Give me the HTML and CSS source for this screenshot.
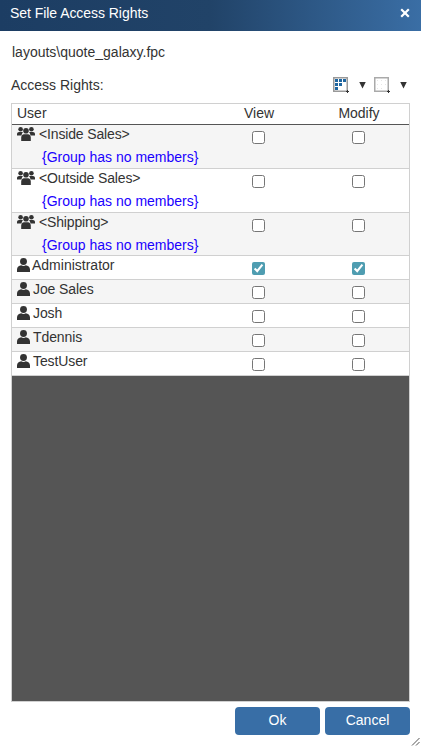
FILE: index.html
```html
<!DOCTYPE html>
<html lang="en">
<head>
<meta charset="utf-8">
<title>Set File Access Rights</title>
<link rel="stylesheet" href="styles.css">
</head>
<body>
<svg class="defs" width="0" height="0" aria-hidden="true">
  <symbol id="user" viewBox="1 0.5 14 15" preserveAspectRatio="none">
    <circle cx="8" cy="4.200" r="3.700" fill="#333"/>
    <path d="M1 15.500v-2.600C1 10.200 3.200 8.600 5.500 8.400c1.500 1 3.500 1 5 0 2.300.2 4.500 1.800 4.500 4.500v2.600z" fill="#333"/>
  </symbol>
  <symbol id="group" viewBox="0 0 18 14">
    <circle cx="3.600" cy="2.300" r="2.300" fill="#333"/>
    <circle cx="14.400" cy="2.300" r="2.300" fill="#333"/>
    <circle cx="9" cy="3.800" r="2.800" fill="#333"/>
    <path d="M0 8.500V7c0-1.200 1-2 2-2h3c.4 0 .7.1 1 .3-.8.6-1.300 1.600-1.400 3.200z" fill="#333"/>
    <path d="M18 8.500V7c0-1.200-1-2-2-2h-3c-.4 0-.7.1-1 .3.800.6 1.300 1.600 1.400 3.200z" fill="#333"/>
    <path d="M4.200 14v-3.500c0-1.800 1.300-3.200 2.800-3.200h4c1.500 0 2.800 1.400 2.800 3.200V14z" fill="#333"/>
  </symbol>
</svg>
<div class="dialog">
  <header class="titlebar">
    <span class="title">Set File Access Rights</span>
    <svg class="close" viewBox="0 0 10 10" width="10" height="10" aria-label="Close"><path d="M1.200 1.200l7.600 7.600M8.800 1.200l-7.600 7.600" stroke="#fff" stroke-width="2.200" fill="none"/></svg>
  </header>
  <main class="body">
    <div class="filename">layouts\quote_galaxy.fpc</div>
    <div class="rights-bar">
      <span>Access Rights:</span>
      <div class="tools">
        <svg class="tool" viewBox="0 0 16 16" width="16" height="16">
          <path d="M.75.750h13.500v13.500H.75z" fill="#fff" stroke="#999" stroke-width="1.500"/>
          <g fill="#1f66a0">
            <rect x="2" y="2" width="3" height="3"/><rect x="6" y="2" width="3" height="3"/><rect x="10" y="2" width="3" height="3"/>
            <rect x="2" y="6" width="3" height="3"/><rect x="6" y="6" width="3" height="3"/>
            <rect x="2" y="10" width="3" height="3"/>
          </g>
          <path d="M13 14.500h3M14.500 13v3" stroke="#333" stroke-width="1" fill="none"/>
        </svg>
        <span class="caret"></span>
        <svg class="tool" viewBox="0 0 16 16" width="16" height="16">
          <path d="M.75.750h13.500v13.500H.75z" fill="#fff" stroke="#aaa" stroke-width="1.500"/>
          <path d="M3 3.500h10M3 7.500h10M3 11.500h7" stroke="#e6e6e6" stroke-width="1" stroke-dasharray="1 3" fill="none"/>
          <path d="M13 14.500h3M14.500 13v3" stroke="#333" stroke-width="1" fill="none"/>
        </svg>
        <span class="caret"></span>
      </div>
    </div>
    <section class="table">
      <div class="row head">
        <span class="name">User</span><span class="col">View</span><span class="col">Modify</span>
      </div>
      <div class="row tall shade">
        <div class="name"><div class="who"><svg class="i-group"><use href="#group"/></svg><span class="group-name">&lt;Inside Sales&gt;</span></div><div class="none">{Group has no members}</div></div>
        <span class="col"><input type="checkbox"></span><span class="col"><input type="checkbox"></span>
      </div>
      <div class="row tall">
        <div class="name"><div class="who"><svg class="i-group"><use href="#group"/></svg><span class="group-name">&lt;Outside Sales&gt;</span></div><div class="none">{Group has no members}</div></div>
        <span class="col"><input type="checkbox"></span><span class="col"><input type="checkbox"></span>
      </div>
      <div class="row tall last-group shade">
        <div class="name"><div class="who"><svg class="i-group"><use href="#group"/></svg><span class="group-name">&lt;Shipping&gt;</span></div><div class="none">{Group has no members}</div></div>
        <span class="col"><input type="checkbox"></span><span class="col"><input type="checkbox"></span>
      </div>
      <div class="row short">
        <div class="name who"><svg class="i-user"><use href="#user"/></svg><span class="tight">Administrator</span></div>
        <span class="col"><input type="checkbox" checked></span><span class="col"><input type="checkbox" checked></span>
      </div>
      <div class="row short shade">
        <div class="name who"><svg class="i-user"><use href="#user"/></svg><span class="user-name">Joe Sales</span></div>
        <span class="col"><input type="checkbox"></span><span class="col"><input type="checkbox"></span>
      </div>
      <div class="row short">
        <div class="name who"><svg class="i-user"><use href="#user"/></svg><span class="user-name">Josh</span></div>
        <span class="col"><input type="checkbox"></span><span class="col"><input type="checkbox"></span>
      </div>
      <div class="row short shade">
        <div class="name who"><svg class="i-user"><use href="#user"/></svg><span class="user-name">Tdennis</span></div>
        <span class="col"><input type="checkbox"></span><span class="col"><input type="checkbox"></span>
      </div>
      <div class="row short">
        <div class="name who"><svg class="i-user"><use href="#user"/></svg><span class="user-name">TestUser</span></div>
        <span class="col"><input type="checkbox"></span><span class="col"><input type="checkbox"></span>
      </div>
      <div class="filler"></div>
    </section>
    <footer class="actions">
      <button class="btn ok" type="button">Ok</button>
      <button class="btn cancel" type="button">Cancel</button>
    </footer>
  </main>
  <svg class="grip" viewBox="0 0 9 9" width="9" height="9" aria-hidden="true"><path d="M8.500 1L1 8.500M8.500 5L5 8.500" stroke="#555" stroke-width="1" fill="none"/></svg>
</div>
</body>
</html>
```
FILE: styles.css
```css
* { box-sizing: border-box; }
html, body { margin: 0; padding: 0; height: 100%; }
body {
  background: #fff;
  color: #333;
  font-family: "Liberation Sans", Arial, sans-serif;
  font-size: 14px;
  line-height: 16px;
  overflow: hidden;
}
.defs { position: absolute; }
.dialog { position: relative; width: 421px; height: 746px; display: flex; flex-direction: column; }
.titlebar {
  height: 31px;
  flex: none;
  display: flex;
  align-items: center;
  justify-content: space-between;
  padding: 0 11px 5px 10px;
  background: linear-gradient(to right, #1c3d63 0%, #214368 50%, #3a6ea5 100%);
  color: #fff;
}
.title { letter-spacing: -0.05px; }
.close { display: block; }
.body { flex: 1; display: flex; flex-direction: column; padding: 13px 11px 0 11px; min-height: 0; }
.filename { height: 16px; padding-left: 1px; margin-bottom: 16px; }
.rights-bar { display: flex; justify-content: space-between; align-items: center; height: 17px; padding-right: 3px; margin-bottom: 10px; }
.tools { display: flex; align-items: center; }
.tool { display: block; margin-right: 10px; }
.tool + .caret + .tool { margin-left: 8px; margin-right: 10px; }
.caret { flex: none; width: 7px; height: 7px; background: #333; clip-path: polygon(0 0, 100% 0, 50% 100%); margin-top: 1px; }
.table {
  height: 599px;
  flex: none;
  border: 1px solid #d0d0d0;
  display: flex;
  flex-direction: column;
  overflow: hidden;
}
.row { display: grid; grid-template-columns: 197px 100px 100px; flex: none; border-bottom: 1px solid #d0d0d0; }
.row .name { padding-left: 5px; }
.col { display: flex; justify-content: center; }
.col input { margin: 0 2px 0 0; width: 13px; height: 13px; accent-color: #4f9db1; display: block; }
.head { height: 21px; border-bottom: 1px solid #555; padding-top: 1px; line-height: 16px; }
.tall { height: 44px; padding-top: 6px; }
.tall .name { margin-top: -5px; }
.last-group { height: 43px; }
.short { height: 24px; padding-top: 6px; }
.short .name { margin-top: -5px; }
.shade { background: #f5f5f5; }
.who { display: flex; align-items: flex-start; }
.i-group { width: 18px; height: 14px; flex: none; margin-right: 4px; margin-top: 1px; }
.group-name { letter-spacing: -0.15px; }
.i-user { width: 13px; height: 14px; flex: none; margin-right: 2px; margin-top: 1px; }
.user-name { margin-left: 1px; letter-spacing: -0.1px; }
.none { color: #1a00ff; padding-left: 25px; margin-top: 7px; }
.filler { flex: 1; background: #555; }
.actions { display: flex; justify-content: flex-end; gap: 5px; margin-top: 5px; }
.btn {
  width: 85px;
  height: 28px;
  border: 0;
  border-radius: 4px;
  background: #386ea6;
  color: #fff;
  font: 14px/16px "Liberation Sans", Arial, sans-serif;
  padding: 0 0 2px;
}
.grip { position: absolute; right: 1px; bottom: 0; }
```
